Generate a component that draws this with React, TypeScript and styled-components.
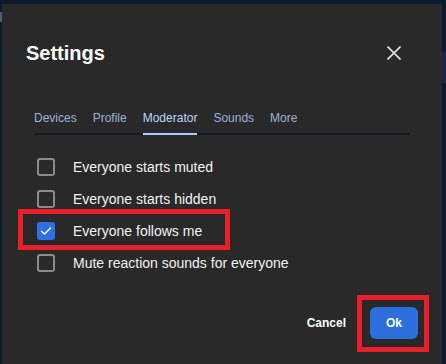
import React, { useState } from "react";
import styled, { createGlobalStyle } from "styled-components";

const GlobalStyle = createGlobalStyle`
  html, body {
    margin: 0;
    padding: 0;
    background: #0e1a30;
    overflow: hidden;
    font-family: "Liberation Sans", Arial, sans-serif;
  }
  * { box-sizing: border-box; }
`;

const Page = styled.div`
  position: relative;
  width: 446px;
  height: 364px;
  padding: 4px 4px 0 2px;
`;

const BackdropBit = styled.div<{ $top: number; $left: number; $w: number; $h: number; $c: string }>`
  position: absolute;
  top: ${(p) => p.$top}px;
  left: ${(p) => p.$left}px;
  width: ${(p) => p.$w}px;
  height: ${(p) => p.$h}px;
  background: ${(p) => p.$c};
`;

const Dialog = styled.div`
  position: relative;
  width: 440px;
  height: 362px;
  background: #292929;
  display: flex;
  flex-direction: column;
`;

const Header = styled.div`
  display: flex;
  align-items: center;
  justify-content: space-between;
  padding: 37px 41px 0 24px;
`;

const Title = styled.h2`
  margin: 0;
  font-size: 20px;
  line-height: 24px;
  font-weight: 700;
  color: #ffffff;
`;

const CloseButton = styled.button`
  display: flex;
  align-items: center;
  justify-content: center;
  width: 14px;
  height: 14px;
  padding: 0;
  border: none;
  background: none;
  cursor: pointer;
  color: #e2e2e2;
`;

const TabList = styled.div`
  display: flex;
  gap: 16px;
  margin: 45px 32px 0 32px;
  border-bottom: 2px solid #141b29;
`;

const Tab = styled.button<{ $active?: boolean }>`
  margin: 0 0 -2px 0;
  padding: 0 0 7px 0;
  border: none;
  border-bottom: 2px solid ${(p) => (p.$active ? "#a9caf6" : "transparent")};
  background: none;
  font-family: inherit;
  font-size: 12px;
  line-height: 16px;
  color: ${(p) => (p.$active ? "#b9d6ff" : "#9ab3d8")};
  cursor: pointer;
`;

const OptionList = styled.div`
  display: flex;
  flex-direction: column;
  margin: 16px 32px 0 32px;
`;

const OptionRow = styled.label`
  position: relative;
  display: flex;
  align-items: center;
  gap: 18px;
  height: 32px;
  padding-left: 3px;
  font-size: 14px;
  color: #f2f2f2;
  cursor: pointer;
`;

const Box = styled.span<{ $checked?: boolean }>`
  display: flex;
  align-items: center;
  justify-content: center;
  width: 18px;
  height: 18px;
  border-radius: 3px;
  border: ${(p) => (p.$checked ? "none" : "2px solid #8b8b8b")};
  background: ${(p) => (p.$checked ? "#2e6ee6" : "transparent")};
`;

const Highlight = styled.div<{ $top: number; $left: number; $w: number; $h: number }>`
  position: absolute;
  top: ${(p) => p.$top}px;
  left: ${(p) => p.$left}px;
  width: ${(p) => p.$w}px;
  height: ${(p) => p.$h}px;
  border: 5px solid #e8202b;
  pointer-events: none;
`;

const Footer = styled.div`
  display: flex;
  justify-content: flex-end;
  align-items: center;
  gap: 12px;
  margin-top: 28px;
  padding: 0 24px;
`;

const ButtonWrap = styled.div`
  position: relative;
  display: flex;
`;

const TextButton = styled.button`
  height: 32px;
  padding: 0 12px;
  border: none;
  background: none;
  font-family: inherit;
  font-size: 12px;
  font-weight: 700;
  color: #ffffff;
  cursor: pointer;
`;

const PrimaryButton = styled.button`
  height: 32px;
  padding: 0 16px;
  border: none;
  border-radius: 6px;
  background: #2a6fdc;
  font-family: inherit;
  font-size: 12px;
  font-weight: 700;
  color: #ffffff;
  cursor: pointer;
`;

const tabs = ["Devices", "Profile", "Moderator", "Sounds", "More"];

export default function App() {
  const [checked, setChecked] = useState<Record<string, boolean>>({
    "Everyone starts muted": false,
    "Everyone starts hidden": false,
    "Everyone follows me": true,
    "Mute reaction sounds for everyone": false,
  });
  const labels = Object.keys(checked);

  return (
    <>
      <GlobalStyle />
      <Page>
        <BackdropBit $top={12} $left={0} $w={2} $h={10} $c="#4b5b78" />
        <BackdropBit $top={52} $left={442} $w={4} $h={31} $c="#17284a" />
        <Dialog>
          <Header>
            <Title>Settings</Title>
            <CloseButton aria-label="Close">
              <svg width="14" height="14" viewBox="0 0 14 14">
                <path d="M0.5 0.5 L13.5 13.5 M13.5 0.5 L0.5 13.5" stroke="currentColor" strokeWidth="1.6" fill="none" />
              </svg>
            </CloseButton>
          </Header>
          <TabList>
            {tabs.map((t) => (
              <Tab key={t} $active={t === "Moderator"}>
                {t}
              </Tab>
            ))}
          </TabList>
          <OptionList>
            {labels.map((l) => (
              <OptionRow key={l} onClick={() => setChecked({ ...checked, [l]: !checked[l] })}>
                <Box $checked={checked[l]}>
                  {checked[l] && (
                    <svg width="12" height="10" viewBox="0 0 12 10">
                      <path d="M1.5 5.2 L4.5 8 L10.5 2" stroke="#ffffff" strokeWidth="1.5" fill="none" strokeLinecap="round" strokeLinejoin="round" />
                    </svg>
                  )}
                </Box>
                {l}
                {l === "Everyone follows me" && <Highlight $top={-6} $left={-16} $w={212} $h={41} />}
              </OptionRow>
            ))}
          </OptionList>
          <Footer>
            <TextButton>Cancel</TextButton>
            <ButtonWrap>
              <PrimaryButton>Ok</PrimaryButton>
              <Highlight $top={-12} $left={-13} $w={72} $h={57} />
            </ButtonWrap>
          </Footer>
        </Dialog>
      </Page>
    </>
  );
}
